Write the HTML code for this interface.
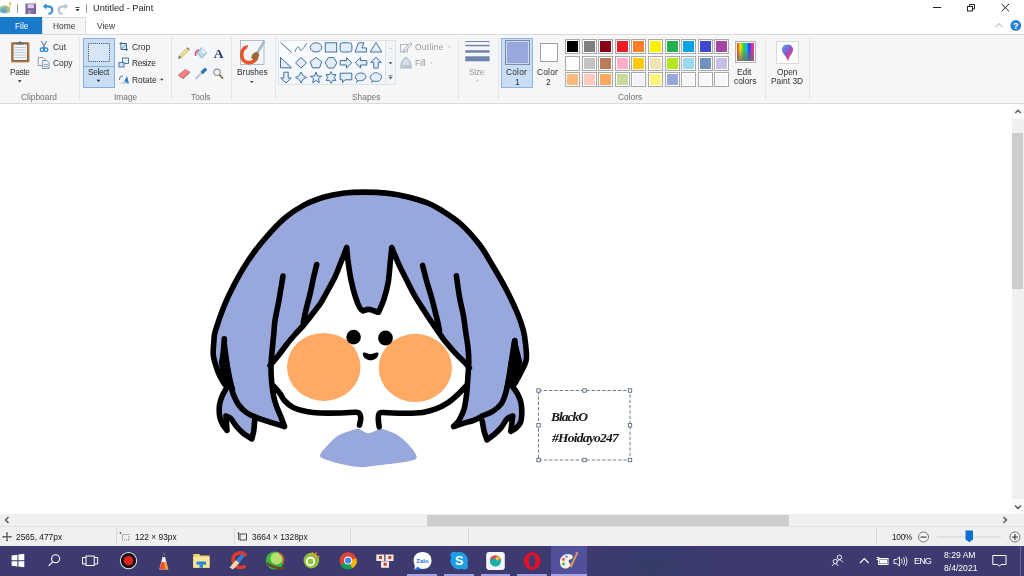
<!DOCTYPE html>
<html><head><meta charset="utf-8">
<style>
*{margin:0;padding:0;box-sizing:border-box}
html,body{width:1024px;height:576px;overflow:hidden;background:#fff;font-family:"Liberation Sans",sans-serif;color:#3b3b3b}
.a{position:absolute}
svg.a{overflow:visible}
.t{position:absolute;white-space:nowrap;will-change:transform;font-size:8.4px;line-height:10px;color:#2e2e2e}
.g{color:#9a9a9a}
.sep{position:absolute;top:38px;width:1px;height:62px;background:#e4e5e7}
.glab{position:absolute;white-space:nowrap;will-change:transform;font-size:8.4px;line-height:10px;color:#6f6f6f;top:92px}
.sw{position:absolute;width:15px;height:15px;border:1px solid #a9a9a9;padding:1px;background:#fff}
.sw i{display:block;width:100%;height:100%}
.tk{position:absolute;top:546px;height:30px}
</style></head><body>
<!-- title bar -->
<svg class="a" style="left:0;top:0" width="90" height="17" viewBox="0 0 90 17">
  <!-- paint app icon (cut at left) -->
  <ellipse cx="4.5" cy="9.5" rx="5.5" ry="4" fill="#8fc7a0"/>
  <ellipse cx="3.5" cy="10.5" rx="3" ry="2.3" fill="#6aa3d8"/>
  <circle cx="6" cy="7.5" r="1.2" fill="#e0a040"/>
  <path d="M9.5,3.5 L10.5,3 L10,13 L9,13Z" fill="#e8b060"/>
  <path d="M8.8,3 L11,2 L10.5,4.5Z" fill="#d69a3a"/>
  <!-- separator -->
  <rect x="17" y="4" width="1" height="9" fill="#9a9a9a"/>
  <!-- save -->
  <rect x="25.5" y="3.5" width="10.5" height="10.5" rx="0.5" fill="#7b5f9a"/>
  <rect x="27.5" y="4.2" width="6.5" height="4" fill="#d8cfe6"/>
  <rect x="28" y="10.5" width="5.5" height="3.5" fill="#a993c2"/>
  <rect x="31.5" y="11" width="1.2" height="2.5" fill="#5b4279"/>
  <!-- undo -->
  <path d="M44,6.3 L47.5,6.3 C51,6.3 52.3,8.2 52.3,10 C52.3,12 50.8,13.8 48.5,13.8" fill="none" stroke="#3a8fd3" stroke-width="2.2"/>
  <path d="M42.8,6.3 L46.5,3.2 L46.5,9.4Z" fill="#3a8fd3"/>
  <!-- redo -->
  <path d="M67,6.3 L63.5,6.3 C60,6.3 58.7,8.2 58.7,10 C58.7,12 60.2,13.8 62.5,13.8" fill="none" stroke="#b9c4cf" stroke-width="2.2"/>
  <path d="M68.2,6.3 L64.5,3.2 L64.5,9.4Z" fill="#b9c4cf"/>
  <!-- customize dropdown -->
  <rect x="75.5" y="7" width="4" height="0.9" fill="#333"/>
  <path d="M75.5,9 L79.5,9 L77.5,11.3Z" fill="#222"/>
  <rect x="86" y="4" width="1" height="9" fill="#9a9a9a"/>
</svg>
<div class="t" style="left:92.5px;top:2px;font-size:9.2px;line-height:12px;color:#1e1e1e">Untitled - Paint</div>
<!-- window controls -->
<svg class="a" style="left:920px;top:0" width="104" height="34" viewBox="0 0 104 34">
  <rect x="13" y="7" width="8.2" height="1" fill="#222"/>
  <rect x="47.5" y="6.5" width="5" height="4.5" fill="none" stroke="#222" stroke-width="1"/>
  <path d="M49.5,6.5 V4.5 H54.5 V9 H52.5" fill="none" stroke="#222" stroke-width="1"/>
  <path d="M81.5,4 L89,11.3 M89,4 L81.5,11.3" stroke="#222" stroke-width="1"/>
  <!-- collapse ribbon -->
  <path d="M75.5,27 L79,23.5 L82.5,27" fill="none" stroke="#c4c4c4" stroke-width="1.1"/>
  <!-- help -->
  <circle cx="95.8" cy="25.4" r="5.3" fill="#1a6fc4"/>
  <circle cx="95.8" cy="25.4" r="4.6" fill="#2a84d8"/>
  <text x="95.8" y="29" font-family="Liberation Sans" font-weight="bold" font-size="9" fill="#fff" text-anchor="middle">?</text>
</svg>
<!-- tabs -->
<div class="a" style="left:0;top:17px;width:42px;height:17px;background:#1979ca"></div>
<div class="t" style="left:14.8px;top:21px;color:#fff">File</div>
<div class="a" style="left:42px;top:17px;width:44px;height:18px;background:#f5f6f7;border:1px solid #dadbdc;border-bottom:none"></div>
<div class="t" style="left:52.8px;top:21px;color:#333">Home</div>
<div class="t" style="left:97.2px;top:21px;color:#333">View</div>

<!-- ribbon -->
<div class="a" style="left:0;top:34px;width:1024px;height:70px;background:#f5f6f7;border-top:1px solid #dadbdc;border-bottom:1px solid #dadbdc"></div>
<div class="sep" style="left:79px"></div>
<div class="sep" style="left:171px"></div>
<div class="sep" style="left:231px"></div>
<div class="sep" style="left:275px"></div>
<div class="sep" style="left:458px"></div>
<div class="sep" style="left:498px"></div>
<div class="sep" style="left:765px"></div>
<div class="sep" style="left:809px"></div>
<div class="glab" style="left:20.5px">Clipboard</div>
<div class="glab" style="left:113.8px">Image</div>
<div class="glab" style="left:190.6px">Tools</div>
<div class="glab" style="left:351.7px">Shapes</div>
<div class="glab" style="left:618.2px">Colors</div>

<!-- Clipboard -->
<svg class="a" style="left:0;top:34px" width="80" height="60" viewBox="0 34 80 60">
  <rect x="11" y="42" width="18.5" height="20.5" rx="1.5" fill="#b08050"/>
  <rect x="12.5" y="43.5" width="15.5" height="17.5" fill="#8a5e36"/>
  <rect x="13.5" y="44.5" width="13.5" height="15.5" fill="#f4f6f8"/>
  <rect x="14.5" y="47" width="11.5" height="1" fill="#b9c9dc"/>
  <rect x="14.5" y="49.5" width="11.5" height="1" fill="#b9c9dc"/>
  <rect x="14.5" y="52" width="11.5" height="1" fill="#b9c9dc"/>
  <rect x="14.5" y="54.5" width="11.5" height="1" fill="#b9c9dc"/>
  <rect x="14.5" y="57" width="11.5" height="1" fill="#b9c9dc"/>
  <path d="M16,44.5 L17,42.3 L19,42.3 L20,40.8 L21,42.3 L23,42.3 L24,44.5Z" fill="#6b6b6b"/>
  <path d="M17.9,80.3 L21.5,80.3 L19.7,82.4Z" fill="#222"/>
  <!-- scissors -->
  <path d="M41.2,41 L45.5,48.5 M46.5,41 L42.5,48.5" stroke="#6b7f96" stroke-width="1.1"/>
  <circle cx="42" cy="49.7" r="1.8" fill="none" stroke="#2a8ad6" stroke-width="1.3"/>
  <circle cx="46" cy="49.7" r="1.8" fill="none" stroke="#2a8ad6" stroke-width="1.3"/>
  <!-- copy -->
  <path d="M38.3,57.5 H43 L45,59.5 V65.5 H38.3Z" fill="#fbfbfb" stroke="#8a8a8a" stroke-width="0.9"/>
  <path d="M42.3,60.5 H47 L49,62.5 V68.5 H42.3Z" fill="#e8eef6" stroke="#7f8fa6" stroke-width="0.9"/>
  <rect x="43.5" y="64" width="4.5" height="0.8" fill="#7fa0c8"/>
  <rect x="43.5" y="66" width="4.5" height="0.8" fill="#7fa0c8"/>
</svg>
<div class="t" style="left:10.2px;top:67px;letter-spacing:-0.36px">Paste</div>
<div class="t" style="left:52.8px;top:41.7px">Cut</div>
<div class="t" style="left:52.8px;top:57.6px">Copy</div>

<!-- Image -->
<div class="a" style="left:83px;top:38px;width:32px;height:49.5px;background:#c9def4;border:1px solid #86aedb"></div>
<div class="a" style="left:83px;top:66px;width:32px;height:1px;background:#86aedb"></div>
<svg class="a" style="left:80px;top:34px" width="92" height="56" viewBox="80 34 92 56">
  <rect x="88.5" y="43.5" width="21" height="18" fill="#d6e6f6" stroke="#44556e" stroke-width="0.9" stroke-dasharray="1.2 0.9"/>
  <path d="M96.7,79.8 L100.3,79.8 L98.5,81.9Z" fill="#222"/>
  <!-- crop -->
  <path d="M121,42 V49.5 H128 M119.5,43.5 H126.5 V51" fill="none" stroke="#3f5f86" stroke-width="1"/>
  <path d="M121.5,49 L126,44.5" stroke="#2a8ad6" stroke-width="1.1"/>
  <rect x="121.5" y="44" width="4.5" height="5" fill="#bfe0f7" opacity="0.6"/>
  <!-- resize -->
  <rect x="122.5" y="58" width="6" height="5.5" fill="#e6f1fb" stroke="#3f6fa6" stroke-width="0.9"/>
  <rect x="119" y="62.5" width="5" height="4.5" fill="#cfe4f7" stroke="#3f6fa6" stroke-width="0.9"/>
  <!-- rotate -->
  <path d="M123,83.5 L127,76 L129,83.5Z" fill="#2f7bc4"/>
  <path d="M118.5,83.8 L129,83.8 L124,81Z" fill="#c9d9ea"/>
  <path d="M119.5,80 C119.5,77.5 121,76 123,76" fill="none" stroke="#5a7fa8" stroke-width="1.1"/>
  <path d="M160,78.7 L163.5,78.7 L161.75,80.7Z" fill="#333"/>
</svg>
<div class="t" style="left:88px;top:67px;letter-spacing:-0.38px">Select</div>
<div class="t" style="left:131.5px;top:41.7px">Crop</div>
<div class="t" style="left:131.5px;top:58px;letter-spacing:-0.35px">Resize</div>
<div class="t" style="left:131.5px;top:74.5px">Rotate</div>

<!-- Tools -->
<svg class="a" style="left:172px;top:34px" width="60" height="56" viewBox="172 34 60 56">
  <!-- pencil -->
  <path d="M179.3,55.5 L186.6,48.1 L189,50.3 L181.6,57.7Z" fill="#eedd88" stroke="#b9a860" stroke-width="0.5"/>
  <path d="M186.6,48.1 L187.6,47.2 L189.9,49.4 L189,50.3Z" fill="#777"/>
  <path d="M179.3,55.5 L181.6,57.7 L177.8,59Z" fill="#777"/>
  <!-- fill bucket -->
  <path d="M201.7,47.5 L206.8,53 L201.7,58.2 L196.8,53Z" fill="#bcd8ea" stroke="#7fa3bf" stroke-width="0.8"/>
  <path d="M201.7,47.5 L206.8,53 L201.7,53Z" fill="#e4f0f8"/>
  <path d="M198.8,50 C196,50.5 195,53 195.6,55.8" fill="none" stroke="#d84a60" stroke-width="1.5"/>
  <!-- A -->
  <text x="218.5" y="57.5" font-family="Liberation Serif" font-weight="bold" font-size="13.5" fill="#1f3a6e" text-anchor="middle">A</text>
  <!-- eraser -->
  <path d="M178.5,74.3 L185.3,68.8 L189.8,71.3 L183,77.3Z" fill="#ec8484"/>
  <path d="M178.5,74.3 L183,77.3 L183,79 L178.5,76Z" fill="#d06466"/>
  <path d="M183,77.3 L189.8,71.3 L189.8,73 L183,79Z" fill="#c85a5c"/>
  <!-- color picker -->
  <path d="M196,78.5 L202.5,72" stroke="#b8c2cc" stroke-width="1.8" stroke-linecap="round"/>
  <path d="M200.5,71.8 L205,67.5 L207.3,69.8 L202.8,74.2Z" fill="#2c70b8"/>
  <!-- magnifier -->
  <circle cx="217" cy="72.3" r="3.2" fill="#eef3f8" stroke="#8a9099" stroke-width="1.1"/>
  <path d="M219.3,74.6 L223,78.6" stroke="#8a6a4a" stroke-width="1.7"/>
</svg>

<!-- Brushes -->
<svg class="a" style="left:232px;top:34px" width="44" height="56" viewBox="232 34 44 56">
  <rect x="240.5" y="40.5" width="23.5" height="24" fill="#f3f5f8" stroke="#a3adb8" stroke-width="0.8"/>
  <path d="M245.5,47.5 C241.5,49.5 240.5,56 243,59.8 C246,64 253,63.5 256.5,58.5" fill="none" stroke="#e4572a" stroke-width="3.6" stroke-linecap="round"/>
  <path d="M243.5,49 L247.5,45.8" stroke="#e4572a" stroke-width="1.5" stroke-linecap="round"/>
  <path d="M257.5,52.5 L263.8,42.3" stroke="#a9b8cc" stroke-width="2.6" stroke-linecap="round"/>
  <ellipse cx="255.3" cy="56" rx="4.3" ry="3.2" transform="rotate(-50 255.3 56)" fill="#9a6a38"/>
  <path d="M250,81 L253.5,81 L251.75,83Z" fill="#333"/>
</svg>
<div class="t" style="left:236.6px;top:66.7px">Brushes</div>

<div class="a" style="left:278px;top:40px;width:118px;height:45px;background:linear-gradient(#fbfcfe,#f2f6fb);border:1px solid #dfe3e8"></div>
<div class="a" style="left:385px;top:40px;width:11px;height:45px;background:#f3f4f6;border:1px solid #dfe3e8"></div>
<svg class="a" style="left:276px;top:36px" width="184" height="54" viewBox="276 36 184 54">
<path d="M280.5,42.4 L291.5,52.4" stroke="#41709f" stroke-width="1"/>
<path d="M295,51.9 C297,45.4 299,46.4 300,49.4 C301,52.4 304,47.4 307,42.9" fill="none" stroke="#41709f" stroke-width="1"/>
<ellipse cx="316" cy="47.4" rx="5.8" ry="4.6" fill="#e3eefa" stroke="#41709f" stroke-width="1"/>
<rect x="325.3" y="42.8" width="11.4" height="9.2" fill="#e3eefa" stroke="#41709f" stroke-width="1"/>
<rect x="340.1" y="42.8" width="11.8" height="9.2" rx="2.2" fill="#e3eefa" stroke="#41709f" stroke-width="1"/>
<path d="M355,52.0 L358.5,42.8 L364,42.8 L362,47.9 L366.5,47.9 L366.5,52.0Z" fill="#e3eefa" stroke="#41709f" stroke-width="1"/>
<path d="M376,42.4 L381.8,52.0 L370.2,52.0Z" fill="#e3eefa" stroke="#41709f" stroke-width="1"/>
<path d="M280.5,57.5 L291.5,67.8 L280.5,67.8Z" fill="#e3eefa" stroke="#41709f" stroke-width="1"/>
<path d="M301,57.5 L306.5,62.8 L301,68.1 L295.5,62.8Z" fill="#e3eefa" stroke="#41709f" stroke-width="1"/>
<path d="M316,57.5 L321.8,61.599999999999994 L319.6,67.8 L312.4,67.8 L310.2,61.599999999999994Z" fill="#e3eefa" stroke="#41709f" stroke-width="1"/>
<path d="M328.2,57.599999999999994 L333.8,57.599999999999994 L336.8,62.8 L333.8,68.0 L328.2,68.0 L325.2,62.8Z" fill="#e3eefa" stroke="#41709f" stroke-width="1"/>
<path d="M340.2,60.599999999999994 L346.5,60.599999999999994 L346.5,57.599999999999994 L351.8,62.8 L346.5,68.0 L346.5,65.0 L340.2,65.0Z" fill="#e3eefa" stroke="#41709f" stroke-width="1"/>
<path d="M366.8,60.599999999999994 L360.5,60.599999999999994 L360.5,57.599999999999994 L355.2,62.8 L360.5,68.0 L360.5,65.0 L366.8,65.0Z" fill="#e3eefa" stroke="#41709f" stroke-width="1"/>
<path d="M373.8,68.1 L373.8,62.3 L370.7,62.3 L376,57.3 L381.3,62.3 L378.2,62.3 L378.2,68.1Z" fill="#e3eefa" stroke="#41709f" stroke-width="1"/>
<path d="M283.8,72.2 L283.8,78.0 L280.7,78.0 L286,83.0 L291.3,78.0 L288.2,78.0 L288.2,72.2Z" fill="#e3eefa" stroke="#41709f" stroke-width="1"/>
<path d="M301,72.0 Q302,76.5 306.5,77.5 Q302,78.5 301,83.0 Q300,78.5 295.5,77.5 Q300,76.5 301,72.0Z" fill="#e3eefa" stroke="#41709f" stroke-width="1"/>
<path d="M316.0,72.2 L317.5,76.0 L321.5,76.2 L318.4,78.8 L319.4,82.7 L316.0,80.5 L312.6,82.7 L313.6,78.8 L310.5,76.2 L314.5,76.0Z" fill="#e3eefa" stroke="#41709f" stroke-width="1"/>
<path d="M331.0,71.7 L332.6,74.7 L336.0,74.6 L334.2,77.5 L336.0,80.4 L332.6,80.3 L331.0,83.3 L329.4,80.3 L326.0,80.4 L327.8,77.5 L326.0,74.6 L329.4,74.7Z" fill="#e3eefa" stroke="#41709f" stroke-width="1"/>
<path d="M340.2,73.2 L351.8,73.2 L351.8,79.8 L345,79.8 L342.5,82.5 L342.7,79.8 L340.2,79.8Z" fill="#e3eefa" stroke="#41709f" stroke-width="1"/>
<path d="M357.5,80.3 C353.5,77.5 356,73.0 361,73.0 C366,73.0 368,77.5 363,80.3 C361,80.8 359,80.8 358.5,80.5 L356.5,82.5 Z" fill="#e3eefa" stroke="#41709f" stroke-width="1"/>
<path d="M372.5,80.5 C369,78.5 370,75.5 372,74.5 C373,72.5 378,72.0 379,74.0 C382,74.5 382.5,78.5 379.5,80.5 C378,82.0 374.5,81.5 373.5,81.0 L371.5,82.5Z" fill="#e3eefa" stroke="#41709f" stroke-width="1"/>
<rect x="389" y="48" width="3" height="0.8" fill="#c9c9c9"/>
<path d="M388.7,62.3 L392.3,62.3 L390.5,64.3Z" fill="#444"/>
<rect x="388.5" y="75.5" width="4" height="0.8" fill="#444"/><path d="M388.7,77.3 L392.3,77.3 L390.5,79.3Z" fill="#444"/>
<rect x="400.5" y="44.5" width="7" height="7.5" fill="none" stroke="#a8b4c0" stroke-width="0.9"/>
<path d="M403.5,50 L410.5,42.5 L412,44 L405,51.5 L403,52Z" fill="#f5f6f7" stroke="#9aa6b2" stroke-width="0.9"/>
<path d="M448.3,46.5 L450.7,46.5 L449.5,47.8Z" fill="#aaa"/>
<path d="M401,66 C401,62 403,58.5 406,57.5 C409,58.5 411,62 411,66Z" fill="#d5dde6" stroke="#9aa6b2" stroke-width="0.9"/>
<rect x="400" y="66.5" width="12" height="2" fill="#b4c0cc"/>
<path d="M430.3,62.5 L432.7,62.5 L431.5,63.8Z" fill="#aaa"/>
<rect x="465.3" y="41" width="24.3" height="1" fill="#7083a8"/>
<rect x="465.3" y="44.8" width="24.3" height="1.5" fill="#7083a8"/>
<rect x="465.3" y="50.2" width="24.3" height="2.5" fill="#7083a8"/>
<rect x="465.3" y="56.3" width="24.3" height="5" fill="#7083a8"/>
<path d="M475.8,80.3 L478.8,80.3 L477.3,81.8Z" fill="#bbb"/>
</svg>
<div class="t g" style="left:415px;top:41.7px;letter-spacing:0.3px">Outline</div>
<div class="t g" style="left:415px;top:58px">Fill</div>
<div class="t g" style="left:469.4px;top:66.7px;letter-spacing:-0.33px">Size</div>
<div class="a" style="left:501.2px;top:38.2px;width:31.5px;height:49.5px;background:#c9def4;border:1px solid #8db6e2"></div>
<div class="a" style="left:505px;top:39.7px;width:24.5px;height:25px;border:1px solid #7d8aa0;padding:1px;background:#d0d8ee"><i style="display:block;width:100%;height:100%;background:#99a8dc"></i></div>
<div class="a" style="left:539.8px;top:42.9px;width:18.2px;height:19.2px;border:1px solid #a0a0a0;background:#fff"></div>
<div class="t" style="left:506.4px;top:67px;letter-spacing:0.2px">Color</div>
<div class="t" style="left:514.5px;top:77.2px">1</div>
<div class="t" style="left:537.4px;top:67px;letter-spacing:0.2px">Color</div>
<div class="t" style="left:545.5px;top:77.2px">2</div>
<div class="sw" style="left:565.2px;top:39.2px"><i style="background:#000000"></i></div>
<div class="sw" style="left:581.8px;top:39.2px"><i style="background:#7f7f7f"></i></div>
<div class="sw" style="left:598.3px;top:39.2px"><i style="background:#880015"></i></div>
<div class="sw" style="left:614.9px;top:39.2px"><i style="background:#ed1c24"></i></div>
<div class="sw" style="left:631.4px;top:39.2px"><i style="background:#ff7f27"></i></div>
<div class="sw" style="left:648.0px;top:39.2px"><i style="background:#fff200"></i></div>
<div class="sw" style="left:664.6px;top:39.2px"><i style="background:#22b14c"></i></div>
<div class="sw" style="left:681.1px;top:39.2px"><i style="background:#00a2e8"></i></div>
<div class="sw" style="left:697.7px;top:39.2px"><i style="background:#3f48cc"></i></div>
<div class="sw" style="left:714.2px;top:39.2px"><i style="background:#a349a4"></i></div>
<div class="sw" style="left:565.2px;top:55.7px"><i style="background:#ffffff"></i></div>
<div class="sw" style="left:581.8px;top:55.7px"><i style="background:#c3c3c3"></i></div>
<div class="sw" style="left:598.3px;top:55.7px"><i style="background:#b97a57"></i></div>
<div class="sw" style="left:614.9px;top:55.7px"><i style="background:#ffaec9"></i></div>
<div class="sw" style="left:631.4px;top:55.7px"><i style="background:#ffc90e"></i></div>
<div class="sw" style="left:648.0px;top:55.7px"><i style="background:#efe4b0"></i></div>
<div class="sw" style="left:664.6px;top:55.7px"><i style="background:#b5e61d"></i></div>
<div class="sw" style="left:681.1px;top:55.7px"><i style="background:#99d9ea"></i></div>
<div class="sw" style="left:697.7px;top:55.7px"><i style="background:#7092be"></i></div>
<div class="sw" style="left:714.2px;top:55.7px"><i style="background:#c8bfe7"></i></div>
<div class="sw" style="left:565.2px;top:72.2px"><i style="background:#ffb77a"></i></div>
<div class="sw" style="left:581.8px;top:72.2px"><i style="background:#ffc9c0"></i></div>
<div class="sw" style="left:598.3px;top:72.2px"><i style="background:#ffa95e"></i></div>
<div class="sw" style="left:614.9px;top:72.2px"><i style="background:#c8db9a"></i></div>
<div class="sw" style="left:631.4px;top:72.2px"><i style="background:#f2f2fc"></i></div>
<div class="sw" style="left:648.0px;top:72.2px"><i style="background:#fff37a"></i></div>
<div class="sw" style="left:664.6px;top:72.2px"><i style="background:#99a8dc"></i></div>
<div class="sw" style="left:681.1px;top:72.2px"><i style="background:#f6f7f8"></i></div>
<div class="sw" style="left:697.7px;top:72.2px"><i style="background:#f6f7f8"></i></div>
<div class="sw" style="left:714.2px;top:72.2px"><i style="background:#f6f7f8"></i></div>
<div class="a" style="left:734.5px;top:41px;width:21.5px;height:21.5px;border:1px solid #b5b5b5;padding:1px;background:#fff"><i style="display:block;width:100%;height:100%;background:linear-gradient(to bottom,rgba(128,128,128,0) 30%,rgba(110,110,110,0.85) 100%),linear-gradient(to right,#ff3030,#ffe000 20%,#20d040 40%,#10c0e0 55%,#3040e0 72%,#e030c0 90%,#ff3050)"></i></div>
<div class="t" style="left:737.1px;top:66.7px">Edit</div>
<div class="t" style="left:733.5px;top:76.4px">colors</div>
<div class="a" style="left:776px;top:41px;width:22.5px;height:22.5px;border:1px solid #d8d8d8;background:#fff"></div>
<svg class="a" style="left:776px;top:41px" width="23" height="23" viewBox="0 0 23 23"><defs><linearGradient id="p3" x1="0" y1="0" x2="1" y2="1"><stop offset="0" stop-color="#30b8f0"/><stop offset="0.45" stop-color="#8a5ad8"/><stop offset="0.8" stop-color="#e8406a"/><stop offset="1" stop-color="#ffb020"/></linearGradient></defs><path d="M11.5,3.5 C15.5,3.5 17.5,6.5 17,9.5 C16.5,12.5 13.5,14.5 12.5,19 L11.5,19.5 C10,14.5 6.5,12.5 6,9.5 C5.5,6.5 7.5,3.5 11.5,3.5Z" fill="url(#p3)"/></svg>
<div class="t" style="left:776.6px;top:66.7px">Open</div>
<div class="t" style="left:770.5px;top:76.4px">Paint 3D</div>


<!-- canvas area -->
<div class="a" style="left:0;top:104px;width:1012px;height:410px;background:#fff"></div>
<!-- v scrollbar -->
<div class="a" style="left:1012px;top:104px;width:12px;height:410px;background:#f0f0f0"></div>
<div class="a" style="left:1012px;top:104px;width:12px;height:15px;background:#fbfbfb"></div>
<div class="a" style="left:1012px;top:499px;width:12px;height:15px;background:#fbfbfb"></div>
<div class="a" style="left:1012.2px;top:132.5px;width:10.8px;height:156.5px;background:#cdcdcd"></div>
<svg class="a" style="left:1012px;top:104px" width="12" height="410" viewBox="0 0 12 410">
  <path d="M3.3,9 L6,6.3 L8.7,9" fill="none" stroke="#505050" stroke-width="1.4"/>
  <path d="M3,401.5 L6,404.5 L9,401.5" fill="none" stroke="#505050" stroke-width="1.4"/>
</svg>
<!-- h scrollbar -->
<div class="a" style="left:0;top:514px;width:1012px;height:12px;background:#f0f0f0"></div>
<div class="a" style="left:427px;top:514.5px;width:362px;height:11px;background:#cdcdcd"></div>
<svg class="a" style="left:0;top:514px" width="1012" height="12" viewBox="0 0 1012 12">
  <path d="M8.5,3 L5.5,6 L8.5,9" fill="none" stroke="#505050" stroke-width="1.4"/>
  <path d="M1003.5,3 L1006.5,6 L1003.5,9" fill="none" stroke="#505050" stroke-width="1.4"/>
</svg>
<div class="a" style="left:1012px;top:514px;width:12px;height:12px;background:#f0f0f0"></div>
<!-- text selection box -->
<svg class="a" style="left:530px;top:382px" width="110" height="86" viewBox="530 382 110 86">
  <rect x="538.5" y="390.5" width="91.5" height="69.5" fill="none" stroke="#5d6b80" stroke-width="0.9" stroke-dasharray="3.3 2"/>
  <g fill="#fff" stroke="#5d6b80" stroke-width="0.9">
    <rect x="536.8" y="388.8" width="3.4" height="3.4"/>
    <rect x="582.8" y="388.8" width="3.4" height="3.4"/>
    <rect x="628.3" y="388.8" width="3.4" height="3.4"/>
    <rect x="536.8" y="423.6" width="3.4" height="3.4"/>
    <rect x="628.3" y="423.6" width="3.4" height="3.4"/>
    <rect x="536.8" y="458.3" width="3.4" height="3.4"/>
    <rect x="582.8" y="458.3" width="3.4" height="3.4"/>
    <rect x="628.3" y="458.3" width="3.4" height="3.4"/>
  </g>
</svg>
<div class="a" style="left:550.5px;top:409px;font-family:'Liberation Serif',serif;font-style:italic;font-weight:bold;font-size:13.5px;line-height:16px;color:#151515;white-space:nowrap;letter-spacing:-1px;will-change:transform">BlackO</div>
<div class="a" style="left:551.5px;top:429.5px;font-family:'Liberation Serif',serif;font-style:italic;font-weight:bold;font-size:13.5px;line-height:16px;color:#151515;white-space:nowrap;letter-spacing:-0.75px;will-change:transform">#Hoidayo247</div>

<svg class="a" style="left:0;top:0" width="1024" height="576" viewBox="0 0 1024 576">
<path d="M227.2,386.7 L223.5,382.5 L218.5,373.0 L213.4,356.0 L214.0,340.0 L215.3,331.3 L223.9,306.5 L234.6,283.8 L248.1,260.8 L263.8,240.0 L284.4,218.3 L303.9,205.1 L323.5,197.3 L343.0,193.2 L364.0,192.1 L388.6,193.4 L408.1,197.0 L427.7,203.0 L440.0,209.4 L460.8,224.0 L479.6,244.8 L492.0,264.5 L506.5,290.0 L518.0,314.5 L523.5,331.0 L525.5,343.8 L526.2,360.0 L520.5,373.0 L516.0,381.5 L512.5,386.5 L517.5,393.8 L521.0,403.0 L521.8,414.0 L520.4,422.7 L515.6,428.4 L510.8,431.3 L512.7,416.0 L507.0,418.9 L501.3,427.4 L494.6,434.1 L487.0,439.8 L484.1,431.3 L482.2,420.8 L464.0,423.1 L473.6,420.3 L483.1,415.6 L453.6,426.5 L459.3,419.8 L464.0,409.3 L466.5,395.0 L458.0,394.4 L447.3,403.2 L435.9,408.9 L422.7,412.4 L405.1,413.3 L379.7,413.0 L359.0,413.0 L341.5,413.0 L319.5,413.0 L306.4,411.5 L293.2,407.6 L284.4,400.5 L273.5,390.0 L276.6,406.5 L281.3,417.9 L284.5,426.5 L271.8,422.7 L257.5,417.9 L255.6,417.0 L254.6,421.7 L253.7,431.3 L251.8,438.9 L243.2,433.2 L236.5,426.5 L230.8,418.5 L226.0,416.0 L227.0,430.3 L222.8,424.6 L219.8,417.0 L219.5,405.0 L222.0,396.5Z" fill="#99a8dc"/>
<path d="M270.0,365.5 L278.0,356.0 L286.6,344.5 L295.0,334.5 L303.6,325.1 L312.0,314.5 L320.6,303.2 L328.0,290.0 L335.2,276.5 L341.0,262.0 L346.7,247.6 L348.0,260.8 L350.8,278.9 L355.0,295.6 L359.9,308.0 L363.3,310.8 L368.9,309.4 L375.8,311.5 L378.6,312.2 L384.2,298.3 L388.3,281.7 L390.4,260.8 L391.8,247.6 L399.4,265.6 L407.2,281.2 L415.0,296.2 L424.0,310.5 L431.5,322.0 L437.0,330.0 L444.5,340.5 L455.6,353.3 L465.3,363.0 L469.4,368.0 L468.8,361.7 L468.0,375.6 L466.5,395.0 L457.9,394.4 L447.3,403.2 L435.9,408.9 L422.7,412.4 L405.1,413.3 L379.7,413.0 L378.3,419.0 L379.2,428.0 L359.5,428.0 L360.8,418.1 L359.0,413.0 L341.5,413.0 L319.5,413.0 L306.4,411.5 L293.2,407.6 L284.4,400.5 L273.5,386.0 L271.7,382.5Z" fill="#fff"/>
<ellipse cx="323.75" cy="366.9" rx="36.75" ry="34" fill="#ffaa64"/>
<ellipse cx="415.35" cy="367.9" rx="36.6" ry="34.1" fill="#ffaa64"/>
<path d="M320.1,455.9C319.6,453.3 324.7,448.7 327.3,445.6C329.9,442.5 332.4,439.6 335.5,437.4C338.6,435.2 342.0,433.8 345.8,432.3C349.6,430.9 355.2,428.9 358.1,428.7C361.0,428.5 361.5,430.5 363.2,431.3C364.9,432.1 366.4,433.3 368.3,433.3C370.2,433.3 372.4,432.1 374.5,431.3C376.6,430.5 377.7,428.5 380.6,428.7C383.5,428.9 388.3,430.7 391.9,432.3C395.5,433.9 399.1,436.1 402.2,438.5C405.3,440.9 408.0,443.8 410.4,446.7C412.8,449.6 416.0,453.7 416.5,455.9C417.0,458.1 416.8,458.8 413.5,460.0C410.2,461.2 403.2,462.2 397.0,463.1C390.8,464.0 382.5,464.9 376.5,465.6C370.5,466.3 366.3,467.3 361.2,467.2C356.1,467.1 350.9,466.1 345.8,465.1C340.7,464.1 334.7,462.5 330.4,461.0C326.1,459.5 320.6,458.5 320.1,455.9Z" fill="#99a8dc"/>
<path d="M227.2,386.7C226.6,386.0 224.9,384.8 223.5,382.5C222.1,380.2 220.2,377.4 218.5,373.0C216.8,368.6 214.2,361.5 213.4,356.0C212.7,350.5 213.7,344.1 214.0,340.0C214.3,335.9 213.7,336.9 215.3,331.3C217.0,325.7 220.7,314.4 223.9,306.5C227.1,298.6 230.6,291.4 234.6,283.8C238.6,276.1 243.2,268.1 248.1,260.8C253.0,253.5 257.7,247.1 263.8,240.0C269.8,232.9 277.7,224.1 284.4,218.3C291.1,212.5 297.4,208.6 303.9,205.1C310.4,201.6 317.0,199.3 323.5,197.3C330.0,195.3 336.2,194.1 343.0,193.2C349.8,192.3 356.4,192.1 364.0,192.1C371.6,192.1 381.2,192.6 388.6,193.4C396.0,194.2 401.6,195.4 408.1,197.0C414.6,198.6 422.4,200.9 427.7,203.0C433.0,205.1 434.5,205.9 440.0,209.4C445.5,212.9 454.2,218.1 460.8,224.0C467.4,229.9 474.4,238.1 479.6,244.8C484.8,251.6 487.5,257.0 492.0,264.5C496.5,272.0 502.2,281.7 506.5,290.0C510.8,298.3 515.2,307.7 518.0,314.5C520.8,321.3 522.2,326.1 523.5,331.0C524.8,335.9 525.0,338.9 525.5,343.8C526.0,348.6 527.1,355.1 526.2,360.0C525.4,364.9 522.2,369.4 520.5,373.0C518.8,376.6 517.3,379.2 516.0,381.5C514.7,383.8 513.1,385.7 512.5,386.5M255.6,417.0C255.4,417.8 254.9,419.3 254.6,421.7C254.3,424.1 254.2,428.4 253.7,431.3C253.2,434.2 252.1,437.6 251.8,438.9M251.8,438.9C250.4,437.9 245.8,435.3 243.2,433.2C240.6,431.1 238.6,428.9 236.5,426.5C234.4,424.1 232.6,420.2 230.8,418.5C229.1,416.8 226.8,416.4 226.0,416.0M226.0,416.0L227.0,430.3M227.0,430.3C226.3,429.4 224.0,426.8 222.8,424.6C221.6,422.4 220.4,420.3 219.8,417.0C219.2,413.7 219.1,408.4 219.5,405.0C219.9,401.6 220.7,399.6 222.0,396.5C223.3,393.4 226.3,388.3 227.2,386.7M512.5,386.5C513.3,387.7 516.1,391.0 517.5,393.8C518.9,396.5 520.3,399.6 521.0,403.0C521.7,406.4 521.9,410.7 521.8,414.0C521.7,417.3 521.4,420.3 520.4,422.7C519.4,425.1 517.2,427.0 515.6,428.4C514.0,429.8 511.6,430.8 510.8,431.3M510.8,431.3L512.7,416.0M512.7,416.0C511.8,416.5 508.9,417.0 507.0,418.9C505.1,420.8 503.4,424.9 501.3,427.4C499.2,429.9 497.0,432.0 494.6,434.1C492.2,436.2 488.3,438.9 487.0,439.8M487.0,439.8C486.5,438.4 484.9,434.5 484.1,431.3C483.3,428.1 482.5,422.6 482.2,420.8M224.3,338.9C224.3,340.8 224.2,345.6 224.5,350.0C224.8,354.4 225.1,360.0 225.8,365.0C226.6,370.0 227.7,375.0 229.0,380.0C230.3,385.0 232.0,390.9 233.6,395.0C235.2,399.1 236.3,401.6 238.4,404.5C240.5,407.4 242.8,410.0 246.0,412.2C249.2,414.4 253.2,416.1 257.5,417.9C261.8,419.6 267.3,421.3 271.8,422.7C276.3,424.1 282.4,425.9 284.5,426.5M514.8,340.6C514.9,342.2 515.7,345.8 515.2,350.0C514.7,354.2 513.0,360.9 512.0,365.6C511.0,370.3 510.0,373.6 509.0,378.0C508.0,382.4 507.2,387.8 506.0,392.0C504.8,396.2 503.8,400.2 501.5,403.5C499.2,406.8 495.6,409.5 492.5,411.5C489.4,413.5 486.2,414.1 483.1,415.6C480.0,417.1 476.8,419.1 473.6,420.3C470.4,421.6 467.3,422.1 464.0,423.1C460.7,424.1 455.3,425.9 453.6,426.5M283.0,276.0C282.3,280.0 280.3,292.7 279.0,300.0C277.7,307.3 276.0,314.4 275.1,320.0C274.2,325.6 274.2,329.3 273.8,333.9C273.3,338.5 272.9,342.5 272.4,347.8C271.9,353.1 271.1,360.0 271.0,365.8C270.9,371.6 271.2,377.3 271.7,382.5C272.2,387.7 272.9,393.0 273.8,397.0C274.6,401.0 275.3,403.0 276.6,406.5C277.9,410.0 280.0,414.6 281.3,417.9C282.6,421.2 284.0,425.1 284.5,426.5M456.4,275.8C456.9,279.3 458.3,290.3 459.5,296.9C460.7,303.5 462.3,309.4 463.4,315.6C464.5,321.8 465.2,328.5 466.0,333.9C466.8,339.3 467.5,343.2 468.0,347.8C468.5,352.4 468.8,357.1 468.8,361.7C468.8,366.3 468.4,370.1 468.0,375.6C467.6,381.2 467.2,389.4 466.5,395.0C465.8,400.6 465.2,405.2 464.0,409.3C462.8,413.4 461.0,416.9 459.3,419.8C457.6,422.7 454.6,425.4 453.6,426.5M270.0,365.5C271.3,363.9 275.2,359.5 278.0,356.0C280.8,352.5 283.8,348.1 286.6,344.5C289.4,340.9 292.2,337.7 295.0,334.5C297.8,331.3 300.8,328.4 303.6,325.1C306.4,321.8 309.2,318.1 312.0,314.5C314.8,310.9 317.9,307.3 320.6,303.2C323.3,299.1 325.6,294.4 328.0,290.0C330.4,285.6 333.0,281.2 335.2,276.5C337.4,271.8 339.1,266.8 341.0,262.0C342.9,257.2 345.8,250.0 346.7,247.6M346.7,247.6C346.9,249.8 347.3,255.6 348.0,260.8C348.7,266.0 349.6,273.1 350.8,278.9C352.0,284.7 353.5,290.8 355.0,295.6C356.5,300.5 358.5,305.5 359.9,308.0C361.3,310.5 362.7,310.3 363.3,310.8M363.3,310.8C364.2,310.6 366.8,309.3 368.9,309.4C371.0,309.5 374.2,311.0 375.8,311.5C377.4,312.0 378.1,312.1 378.6,312.2M378.6,312.2C379.5,309.9 382.6,303.4 384.2,298.3C385.8,293.2 387.3,287.9 388.3,281.7C389.3,275.4 389.8,266.5 390.4,260.8C391.0,255.1 391.6,249.8 391.8,247.6M391.8,247.6C393.1,250.6 396.8,260.0 399.4,265.6C402.0,271.2 404.6,276.1 407.2,281.2C409.8,286.4 412.2,291.3 415.0,296.2C417.8,301.1 421.2,306.2 424.0,310.5C426.8,314.8 429.3,318.8 431.5,322.0C433.7,325.2 434.8,326.9 437.0,330.0C439.2,333.1 441.4,336.6 444.5,340.5C447.6,344.4 452.1,349.6 455.6,353.3C459.1,357.1 463.0,360.6 465.3,363.0C467.6,365.4 468.7,367.2 469.4,368.0M316.7,264.5C316.1,267.1 314.0,275.4 313.0,280.0C312.0,284.6 311.6,287.2 310.5,292.0C309.4,296.8 307.4,304.1 306.2,309.0C305.0,313.9 304.0,318.9 303.5,321.7C303.0,324.5 303.1,325.3 303.0,326.0M422.6,265.4C423.3,268.0 425.2,276.0 426.7,281.2C428.2,286.5 430.0,291.9 431.4,296.9C432.8,301.9 433.9,306.6 435.0,311.0C436.1,315.4 437.2,319.7 438.0,323.0C438.8,326.3 439.2,329.7 439.5,331.0M273.5,386.0C274.6,387.2 278.2,391.1 280.0,393.5C281.8,395.9 282.2,398.1 284.4,400.5C286.6,402.9 289.5,405.8 293.2,407.6C296.9,409.4 302.0,410.6 306.4,411.5C310.8,412.4 313.6,412.8 319.5,413.0C325.4,413.2 335.6,413.1 341.5,413.0C347.4,412.9 351.8,412.3 354.7,412.3C357.6,412.3 358.0,412.0 359.0,413.0C360.0,414.0 360.7,416.1 360.8,418.1C360.9,420.1 359.7,423.9 359.5,425.1M379.2,426.9C379.1,425.6 378.2,421.3 378.3,419.0C378.4,416.7 378.1,414.1 379.7,413.0C381.2,411.9 383.4,412.6 387.6,412.7C391.8,412.8 399.2,413.4 405.1,413.3C411.0,413.2 417.6,413.1 422.7,412.4C427.8,411.7 431.8,410.4 435.9,408.9C440.0,407.4 443.6,405.6 447.3,403.2C451.0,400.8 454.6,397.4 457.9,394.4C461.2,391.4 465.5,386.6 467.0,385.0" fill="none" stroke="#000" stroke-width="5.6" stroke-linecap="round" stroke-linejoin="round"/>
<path d="M223.9,338.6 L226.0,341.0 L227.6,352.0 L229.6,366.0 L232.3,380.0 L235.0,390.0 L229.0,389.0 L224.0,383.0 L220.5,373.0 L219.5,362.0 L221.0,352.0 L222.0,341.0Z M514.3,339.5 L516.5,341.0 L519.3,352.0 L521.8,362.0 L519.0,372.0 L515.0,380.0 L511.0,386.0 L504.5,390.0 L506.5,378.0 L508.5,365.0 L510.5,352.0 L512.2,341.0Z" fill="#000" stroke="#000" stroke-width="1" stroke-linejoin="round"/>
<circle cx="353.6" cy="337.1" r="7.3" fill="#000"/><circle cx="385.5" cy="338" r="7.4" fill="#000"/>
<path d="M362.8,353.8 C363,352.3 365.5,352.3 367,353.3 C369,354.3 372.5,354.2 374.5,353 C376,352 378.8,352.2 378.6,353.8 C378,358 374.5,360.3 370.8,360.3 C366.8,360.3 363,358 362.8,353.8Z" fill="#000"/>
</svg>
<!-- status bar -->
<div class="a" style="left:0;top:526px;width:1024px;height:20px;background:#f0f0f0;border-top:1px solid #e3e3e3"></div>
<div class="a" style="left:116px;top:528px;width:1px;height:16px;background:#d9d9d9"></div>
<div class="a" style="left:233.5px;top:528px;width:1px;height:16px;background:#d9d9d9"></div>
<div class="a" style="left:468px;top:528px;width:1px;height:16px;background:#d9d9d9"></div>
<div class="a" style="left:350px;top:528px;width:1px;height:16px;background:#d9d9d9"></div>
<div class="a" style="left:876px;top:528px;width:1px;height:16px;background:#d9d9d9"></div>
<svg class="a" style="left:0;top:526px" width="260" height="20" viewBox="0 526 260 20">
  <path d="M7,533 V540.5 M3,536.8 H11" stroke="#333" stroke-width="1"/>
  <path d="M6,533 H8 M6,540.5 H8 M3,535.8 V537.8 M11,535.8 V537.8" stroke="#333" stroke-width="0.8"/>
  <rect x="122.5" y="534.5" width="6.5" height="5.5" fill="none" stroke="#555" stroke-width="0.8" stroke-dasharray="1 1"/>
  <path d="M120.5,532 V534 M119.5,533 H121.5" stroke="#555" stroke-width="0.8"/>
  <rect x="240" y="534" width="6.5" height="6" fill="none" stroke="#333" stroke-width="0.9"/>
  <path d="M238.5,540 V532.5 M237.5,533.5 L238.5,532.5 L239.5,533.5" fill="none" stroke="#333" stroke-width="0.8"/>
</svg>
<div class="t" style="left:16.25px;top:531.5px;color:#161616">2565, 477px</div>
<div class="t" style="left:135px;top:531.5px;color:#161616">122 × 93px</div>
<div class="t" style="left:251.9px;top:531.5px;color:#161616">3664 × 1328px</div>
<div class="t" style="left:891.6px;top:532.3px;color:#222;letter-spacing:-0.3px">100%</div>
<svg class="a" style="left:910px;top:526px" width="114" height="20" viewBox="910 526 114 20">
  <circle cx="923.5" cy="537" r="5" fill="#f7f7f7" stroke="#666" stroke-width="0.9"/>
  <rect x="920.5" y="536.5" width="6" height="1.2" fill="#444"/>
  <rect x="937" y="536.5" width="64" height="1" fill="#d4d4d4"/>
  <path d="M965.5,530.5 H973 V539.5 L969.25,542.3 L965.5,539.5Z" fill="#0a6fd0"/>
  <circle cx="1014.9" cy="537" r="5" fill="#f7f7f7" stroke="#666" stroke-width="0.9"/>
  <rect x="1011.9" y="536.5" width="6" height="1.2" fill="#444"/>
  <rect x="1014.3" y="534" width="1.2" height="6" fill="#444"/>
</svg>

<!-- taskbar -->
<div class="a" style="left:0;top:546px;width:1024px;height:30px;background:#3c3a6e"></div>
<div class="a" style="left:588px;top:546px;width:130px;height:30px;background:radial-gradient(ellipse 60px 25px at 65px 20px,rgba(45,62,100,0.55),rgba(45,62,100,0))"></div>
<div class="a" style="left:551px;top:546px;width:36px;height:30px;background:#52509a"></div>
<div class="a" style="left:1020px;top:546px;width:1px;height:30px;background:#6a68a0"></div>
<div class="a" style="left:406.7px;top:573.5px;width:30.5px;height:2.5px;background:#a4a3e3"></div>
<div class="a" style="left:444px;top:573.5px;width:29.6px;height:2.5px;background:#a4a3e3"></div>
<div class="a" style="left:480.6px;top:573.5px;width:29.7px;height:2.5px;background:#a4a3e3"></div>
<div class="a" style="left:517.3px;top:573.5px;width:29.7px;height:2.5px;background:#a4a3e3"></div>
<div class="a" style="left:551px;top:573.5px;width:36px;height:2.5px;background:#a4a3e3"></div>
<svg class="a" style="left:0;top:546px" width="1024" height="30" viewBox="0 546 1024 30">
  <!-- windows logo -->
  <path d="M11.6,555.6 L17.4,554.8 V560.2 H11.6Z M18.4,554.6 L24.3,553.8 V560.2 H18.4Z M11.6,561.2 H17.4 V566.4 L11.6,565.7Z M18.4,561.2 H24.3 V567.3 L18.4,566.5Z" fill="#fff"/>
  <!-- search -->
  <circle cx="55.6" cy="558.7" r="4" fill="none" stroke="#fff" stroke-width="1.1"/>
  <path d="M52.6,561.8 L48.6,565.8" stroke="#fff" stroke-width="1.2"/>
  <!-- task view -->
  <rect x="86" y="556" width="8.2" height="9.5" fill="none" stroke="#fff" stroke-width="1"/>
  <path d="M86,557.5 H82.5 V564 H86 M94.2,557.5 H97.7 V564 H94.2" fill="none" stroke="#fff" stroke-width="1"/>
  <!-- record -->
  <circle cx="128.5" cy="560.7" r="8.6" fill="#e8e8e8"/>
  <circle cx="128.5" cy="560.7" r="7.6" fill="#111"/>
  <circle cx="128.5" cy="560.7" r="4.8" fill="#e02020"/>
  <!-- pencil crayon -->
  <path d="M163.8,552 L168.3,569.5 L159.3,569.5Z" fill="#f3ede6"/>
  <path d="M163.8,552 L165,557 L162.6,557Z" fill="#333"/>
  <path d="M161.5,562 L166,562 L168.3,569.5 L159.3,569.5Z" fill="#e8503a"/>
  <path d="M164,562 L166,562 L168.3,569.5 L165,569.5Z" fill="#f0a030"/>
  <!-- file explorer -->
  <path d="M193.3,554 H199 L200.5,555.5 H209.5 V567.7 H193.3Z" fill="#f4d26a"/>
  <rect x="193.3" y="557" width="16.2" height="10.7" fill="#fce49a"/>
  <rect x="196.5" y="561.5" width="9.5" height="3.2" fill="#1e8ad6"/>
  <rect x="199.5" y="564.7" width="3.5" height="3" fill="#1e8ad6"/>
  <!-- ccleaner -->
  <path d="M246,556 C243,551 234,552 233,559 C232.5,565 238,570 245.5,566" fill="none" stroke="#e03a2a" stroke-width="3.4"/>
  <path d="M229.5,567.5 L236,560 L239.5,563 L233,569.5Z" fill="#f0d8b0"/>
  <path d="M236,560 L242,553.5 L244.5,556 L239.5,563Z" fill="#3a7ad0"/>
  <!-- game globe -->
  <circle cx="274.8" cy="560.6" r="9" fill="#3cb83c"/>
  <circle cx="276.5" cy="558.5" r="6" fill="#b8e070"/>
  <path d="M266.5,563 C270,566 277,569 284,568" fill="none" stroke="#6a4a2a" stroke-width="2.4"/>
  <path d="M279,553 C283,555 284.5,559 283,563" fill="none" stroke="#e0562a" stroke-width="1.6"/>
  <!-- coccoc -->
  <circle cx="311.4" cy="560.6" r="7.8" fill="#8cc43a"/>
  <circle cx="310.5" cy="561.5" r="3.8" fill="none" stroke="#fff" stroke-width="1.8"/>
  <path d="M313.5,556.5 L316.5,552.5 M315,558.5 L319.5,556 M312,555.5 L312.5,552" stroke="#f08a30" stroke-width="1.3"/>
  <!-- chrome -->
  <circle cx="348.1" cy="560.6" r="8.6" fill="#db4437"/>
  <path d="M348.1,560.6 L340.6,564.9 A8.6,8.6 0 0 0 352.4,568.0Z" fill="#0f9d58"/>
  <path d="M348.1,560.6 L356.7,560.6 A8.6,8.6 0 0 1 348.1,569.2 A8.6,8.6 0 0 1 340.6,564.9Z" fill="#0f9d58"/>
  <path d="M348.1,560.6 L356.7,560.6 A8.6,8.6 0 0 1 352.4,568.0 L348.1,560.6Z" fill="#f4b400"/>
  <path d="M348.1,552 A8.6,8.6 0 0 1 356.7,560.6 L348.1,560.6Z" fill="#f4b400" opacity="0"/>
  <path d="M356.4,558.2 A8.6,8.6 0 0 1 352.4,568.0 L348.1,560.6Z" fill="#f4b400"/>
  <circle cx="348.1" cy="560.6" r="4" fill="#fff"/>
  <circle cx="348.1" cy="560.6" r="3.1" fill="#4285f4"/>
  <!-- unikey -->
  <rect x="376.3" y="554.5" width="8" height="6.5" fill="#f2e8e4"/>
  <rect x="385.5" y="554.5" width="8" height="6.5" fill="#f2e8e4"/>
  <rect x="381" y="561.3" width="8" height="6.5" fill="#f2e8e4"/>
  <rect x="379" y="556" width="3" height="3" fill="#d0452a"/>
  <rect x="388.3" y="556" width="3" height="3" fill="#d0452a"/>
  <rect x="383.7" y="562.8" width="3" height="3" fill="#d0452a"/>
  <!-- zalo -->
  <path d="M422.5,552 C428,552 431.5,555.5 431.5,560.5 C431.5,565.5 428,569 422.5,569 C420,569 418.5,568.5 417,567.5 L414,570 L415,566 C414.2,564.5 413.6,562.5 413.6,560.5 C413.6,555.5 417,552 422.5,552Z" fill="#fff"/>
  <path d="M414,570 L417.8,566.5 C419,567.8 420.5,569 422.5,569 L418,570Z" fill="#1a72e8"/>
  <text x="422.5" y="562.8" font-family="Liberation Sans" font-size="6" font-weight="bold" fill="#1a6ee0" text-anchor="middle">Zalo</text>
  <!-- skype -->
  <circle cx="459.2" cy="560.6" r="8.8" fill="#1ea0e6"/>
  <circle cx="454" cy="555.2" r="3.5" fill="#1ea0e6"/>
  <circle cx="464.4" cy="566" r="3.5" fill="#1ea0e6"/>
  <text x="459.2" y="565" font-family="Liberation Sans" font-size="12.5" font-weight="bold" fill="#fff" text-anchor="middle">S</text>
  <!-- paint 3d -->
  <rect x="486.2" y="552" width="18.6" height="18" rx="3" fill="#f7f7f7"/>
  <circle cx="495.5" cy="561" r="5.6" fill="#18b0a8"/>
  <path d="M490,560 C490,556 494,555 497,555.5 C499.5,556 500.5,558.5 500,560 C497,558 493,558 490,560Z" fill="#e04848"/>
  <circle cx="497.5" cy="558.5" r="2" fill="#f5c030"/>
  <!-- opera -->
  <ellipse cx="532.2" cy="561" rx="8.4" ry="9" fill="#e0102a"/>
  <ellipse cx="532.2" cy="561" rx="3.3" ry="6.3" fill="#3c3a6e"/>
  <!-- paint -->
  <path d="M560,563 C559,556 566,552.5 571,554.5 C574,556 573,559 570,559.5 C568,560 568.5,562.5 570,563.5 C571.5,565 569,569 564.5,568.5 C561.5,568 560.3,566 560,563Z" fill="#f5f0e6"/>
  <circle cx="563.5" cy="559.5" r="1.4" fill="#e84a4a"/>
  <circle cx="566.5" cy="556.8" r="1.3" fill="#4a9ae8"/>
  <circle cx="563.5" cy="564" r="1.4" fill="#48b048"/>
  <path d="M569.5,566.5 L576,553.5 L577.6,554.3 L571.5,567.5Z" fill="#d8a050"/>
  <path d="M575,553 L577.5,551.5 L578.5,554.5Z" fill="#f08a8a"/>
  <!-- tray -->
  <circle cx="839.4" cy="557.3" r="2.2" fill="none" stroke="#fff" stroke-width="0.9"/>
  <path d="M837,562.2 C837.6,560.5 838.5,559.8 839.4,559.8 C840.8,559.8 842.2,560.8 842.8,562.4" fill="none" stroke="#fff" stroke-width="0.9"/>
  <circle cx="835.2" cy="561.5" r="2.1" fill="none" stroke="#fff" stroke-width="0.9"/>
  <path d="M832.2,566 C832.8,564.4 834,563.7 835.2,563.7 C836.5,563.7 837.6,564.4 838.2,566" fill="none" stroke="#fff" stroke-width="0.9"/>
  <path d="M860,563 L864.3,558.5 L868.6,563" fill="none" stroke="#fff" stroke-width="1.1"/>
  <rect x="878.5" y="558.5" width="9.5" height="6" fill="none" stroke="#fff" stroke-width="1"/>
  <rect x="879.5" y="559.5" width="7.5" height="4" fill="#fff"/>
  <path d="M876.5,557.5 H879.2 V560.5 M876.5,559.5 H878" fill="none" stroke="#fff" stroke-width="0.9"/>
  <path d="M894,559.5 H896.5 L899.5,557 V566 L896.5,563.5 H894Z" fill="none" stroke="#fff" stroke-width="0.9"/>
  <path d="M901.3,559 C902.3,560.5 902.3,562 901.3,563.5 M903.3,557.5 C905,559.5 905,563 903.3,565 M905.3,556.5 C907.5,559 907.5,563.5 905.3,566" fill="none" stroke="#fff" stroke-width="0.9"/>
  <path d="M992.8,555.5 H1006 V564.5 H1001 L999.4,566.3 L997.8,564.5 H992.8Z" fill="none" stroke="#fff" stroke-width="1"/>
</svg>
<div class="t" style="left:913.6px;top:556px;color:#fff;font-size:9.2px;line-height:10px;letter-spacing:-0.95px">ENG</div>
<div class="t" style="left:943.5px;top:549.6px;color:#fff;font-size:8.6px;line-height:10px">8:29 AM</div>
<div class="t" style="left:943.5px;top:563px;color:#fff;font-size:8.6px;line-height:10px">8/4/2021</div>

</body></html>
